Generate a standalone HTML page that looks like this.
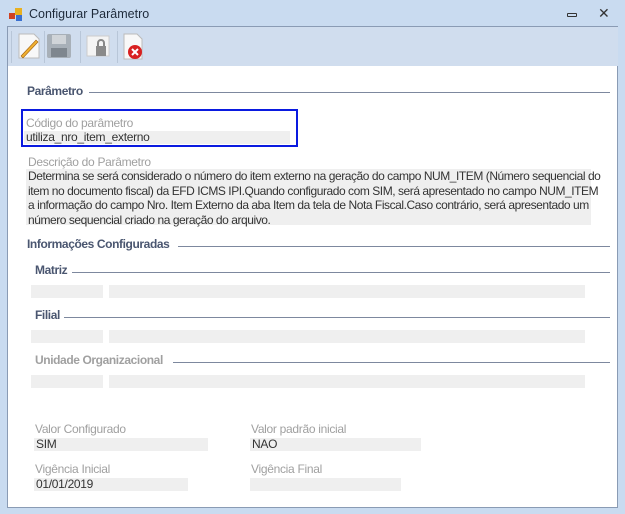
<!DOCTYPE html>
<html><head><meta charset="utf-8"><style>
*{margin:0;padding:0;box-sizing:border-box}
body{width:625px;height:514px;background:#c9dbf0;font-family:"Liberation Sans",sans-serif;font-size:12px;position:relative;overflow:hidden}
.a{position:absolute}
.title{left:29px;top:7px;font-size:12.5px;color:#1e2a3a}
.tb{left:7px;top:26px;width:611px;height:40px;background:#d0ddee;border-top:1px solid #8a9bb4;border-left:1px solid #8a9bb4}
.content{left:7px;top:66px;width:611px;height:442px;background:#fff;border-left:1px solid #8a9bb4;border-right:1px solid #8a9bb4;border-bottom:1px solid #8a9bb4}
.h{font-weight:bold;color:#4a5670;font-size:12px;letter-spacing:-0.4px;white-space:nowrap}
.ln{height:1px;background:#7d889e}
.lbl{color:#a0a0a0;font-size:12px;letter-spacing:-0.3px;white-space:nowrap}
.box{background:#efefef}
.val{color:#333;font-size:12px;padding-left:2px;line-height:15px;letter-spacing:-0.3px}
.sep{width:1px;height:32px;background:#fff;border-left:1px solid #b8c6d8}
</style></head><body>
<svg class="a" style="left:9px;top:8px" width="14" height="14"><rect x="0" y="5" width="6" height="6" fill="#d04020"/><rect x="6" y="0" width="7" height="7" fill="#e8b020"/><rect x="7" y="7" width="6" height="6" fill="#3a70d0"/></svg>
<div class="a title">Configurar Parâmetro</div>
<div class="a" style="left:567px;top:13px;width:10px;height:4px;border:1px solid #333;border-radius:1px"></div>
<div class="a" style="left:598px;top:5px;font-size:14px;color:#333">✕</div>
<div class="a tb"></div>
<div class="a sep" style="left:11px;top:31px"></div>
<svg class="a" style="left:16px;top:32px" width="26" height="28"><path d="M3 2h15l5 5v19H3z" fill="#f8f8f8" stroke="#bbb"/><path d="M5 24L20 8l2 2L7 26z" fill="#f0b030" stroke="#a06010" stroke-width=".6"/></svg>
<div class="a sep" style="left:44px;top:31px"></div>
<svg class="a" style="left:45px;top:32px" width="28" height="28"><rect x="2" y="2" width="24" height="24" rx="2" fill="#a8b0b8"/><rect x="7" y="3" width="14" height="9" fill="#d0d4d8"/><rect x="6" y="16" width="16" height="9" fill="#7e868e"/></svg>
<div class="a sep" style="left:80px;top:31px"></div>
<svg class="a" style="left:85px;top:32px" width="28" height="28"><rect x="2" y="4" width="22" height="20" fill="#f4f4f4" stroke="#ccc"/><path d="M13 14v-3a3 3 0 016 0v3" fill="none" stroke="#888" stroke-width="2"/><rect x="11" y="14" width="10" height="10" fill="#8a8a8a"/></svg>
<div class="a sep" style="left:117px;top:31px"></div>
<svg class="a" style="left:121px;top:32px" width="26" height="30"><path d="M3 2h13l5 5v20H3z" fill="#f8f8f8" stroke="#bbb"/><circle cx="14" cy="20" r="7" fill="#d82020"/><path d="M11 17l6 6M17 17l-6 6" stroke="#fff" stroke-width="2"/></svg>
<div class="a content"></div>

<div class="a h" style="left:27px;top:84px">Parâmetro</div>
<div class="a ln" style="left:89px;top:92px;width:521px"></div>
<div class="a" style="left:21px;top:109px;width:277px;height:38px;border:2px solid #0a1ae0"></div>
<div class="a lbl" style="left:26px;top:116px">Código do parâmetro</div>
<div class="a box" style="left:24px;top:131px;width:266px;height:13px"></div>
<div class="a val" style="left:24px;top:130px">utiliza_nro_item_externo</div>

<div class="a lbl" style="left:28px;top:155px">Descrição do Parâmetro</div>
<div class="a box" style="left:26px;top:169px;width:565px;height:56px"></div>
<div class="a" style="left:28px;top:169px;width:600px;font-size:12px;line-height:14.5px;color:#333;letter-spacing:-0.45px;white-space:nowrap">Determina se será considerado o número do item externo na geração do campo NUM_ITEM (Número sequencial do<br>item no documento fiscal) da EFD ICMS IPI.Quando configurado com SIM, será apresentado no campo NUM_ITEM<br>a informação do campo Nro. Item Externo da aba Item da tela de Nota Fiscal.Caso contrário, será apresentado um<br>número sequencial criado na geração do arquivo.</div>

<div class="a h" style="left:27px;top:237px">Informações Configuradas</div>
<div class="a ln" style="left:178px;top:246px;width:432px"></div>
<div class="a h" style="left:35px;top:263px">Matriz</div>
<div class="a ln" style="left:72px;top:272px;width:538px"></div>
<div class="a box" style="left:31px;top:285px;width:72px;height:13px"></div>
<div class="a box" style="left:109px;top:285px;width:476px;height:13px"></div>
<div class="a h" style="left:35px;top:308px">Filial</div>
<div class="a ln" style="left:64px;top:317px;width:546px"></div>
<div class="a box" style="left:31px;top:330px;width:72px;height:13px"></div>
<div class="a box" style="left:109px;top:330px;width:476px;height:13px"></div>
<div class="a h" style="left:35px;top:353px;color:#a0a0a0">Unidade Organizacional</div>
<div class="a ln" style="left:173px;top:362px;width:437px"></div>
<div class="a box" style="left:31px;top:375px;width:72px;height:13px"></div>
<div class="a box" style="left:109px;top:375px;width:476px;height:13px"></div>

<div class="a lbl" style="left:35px;top:422px">Valor Configurado</div>
<div class="a box" style="left:34px;top:438px;width:174px;height:13px"></div>
<div class="a val" style="left:34px;top:437px">SIM</div>
<div class="a lbl" style="left:251px;top:422px">Valor padrão inicial</div>
<div class="a box" style="left:250px;top:438px;width:171px;height:13px"></div>
<div class="a val" style="left:250px;top:437px">NAO</div>
<div class="a lbl" style="left:35px;top:462px">Vigência Inicial</div>
<div class="a box" style="left:34px;top:478px;width:154px;height:13px"></div>
<div class="a val" style="left:34px;top:477px">01/01/2019</div>
<div class="a lbl" style="left:251px;top:462px">Vigência Final</div>
<div class="a box" style="left:250px;top:478px;width:151px;height:13px"></div>
</body></html>
